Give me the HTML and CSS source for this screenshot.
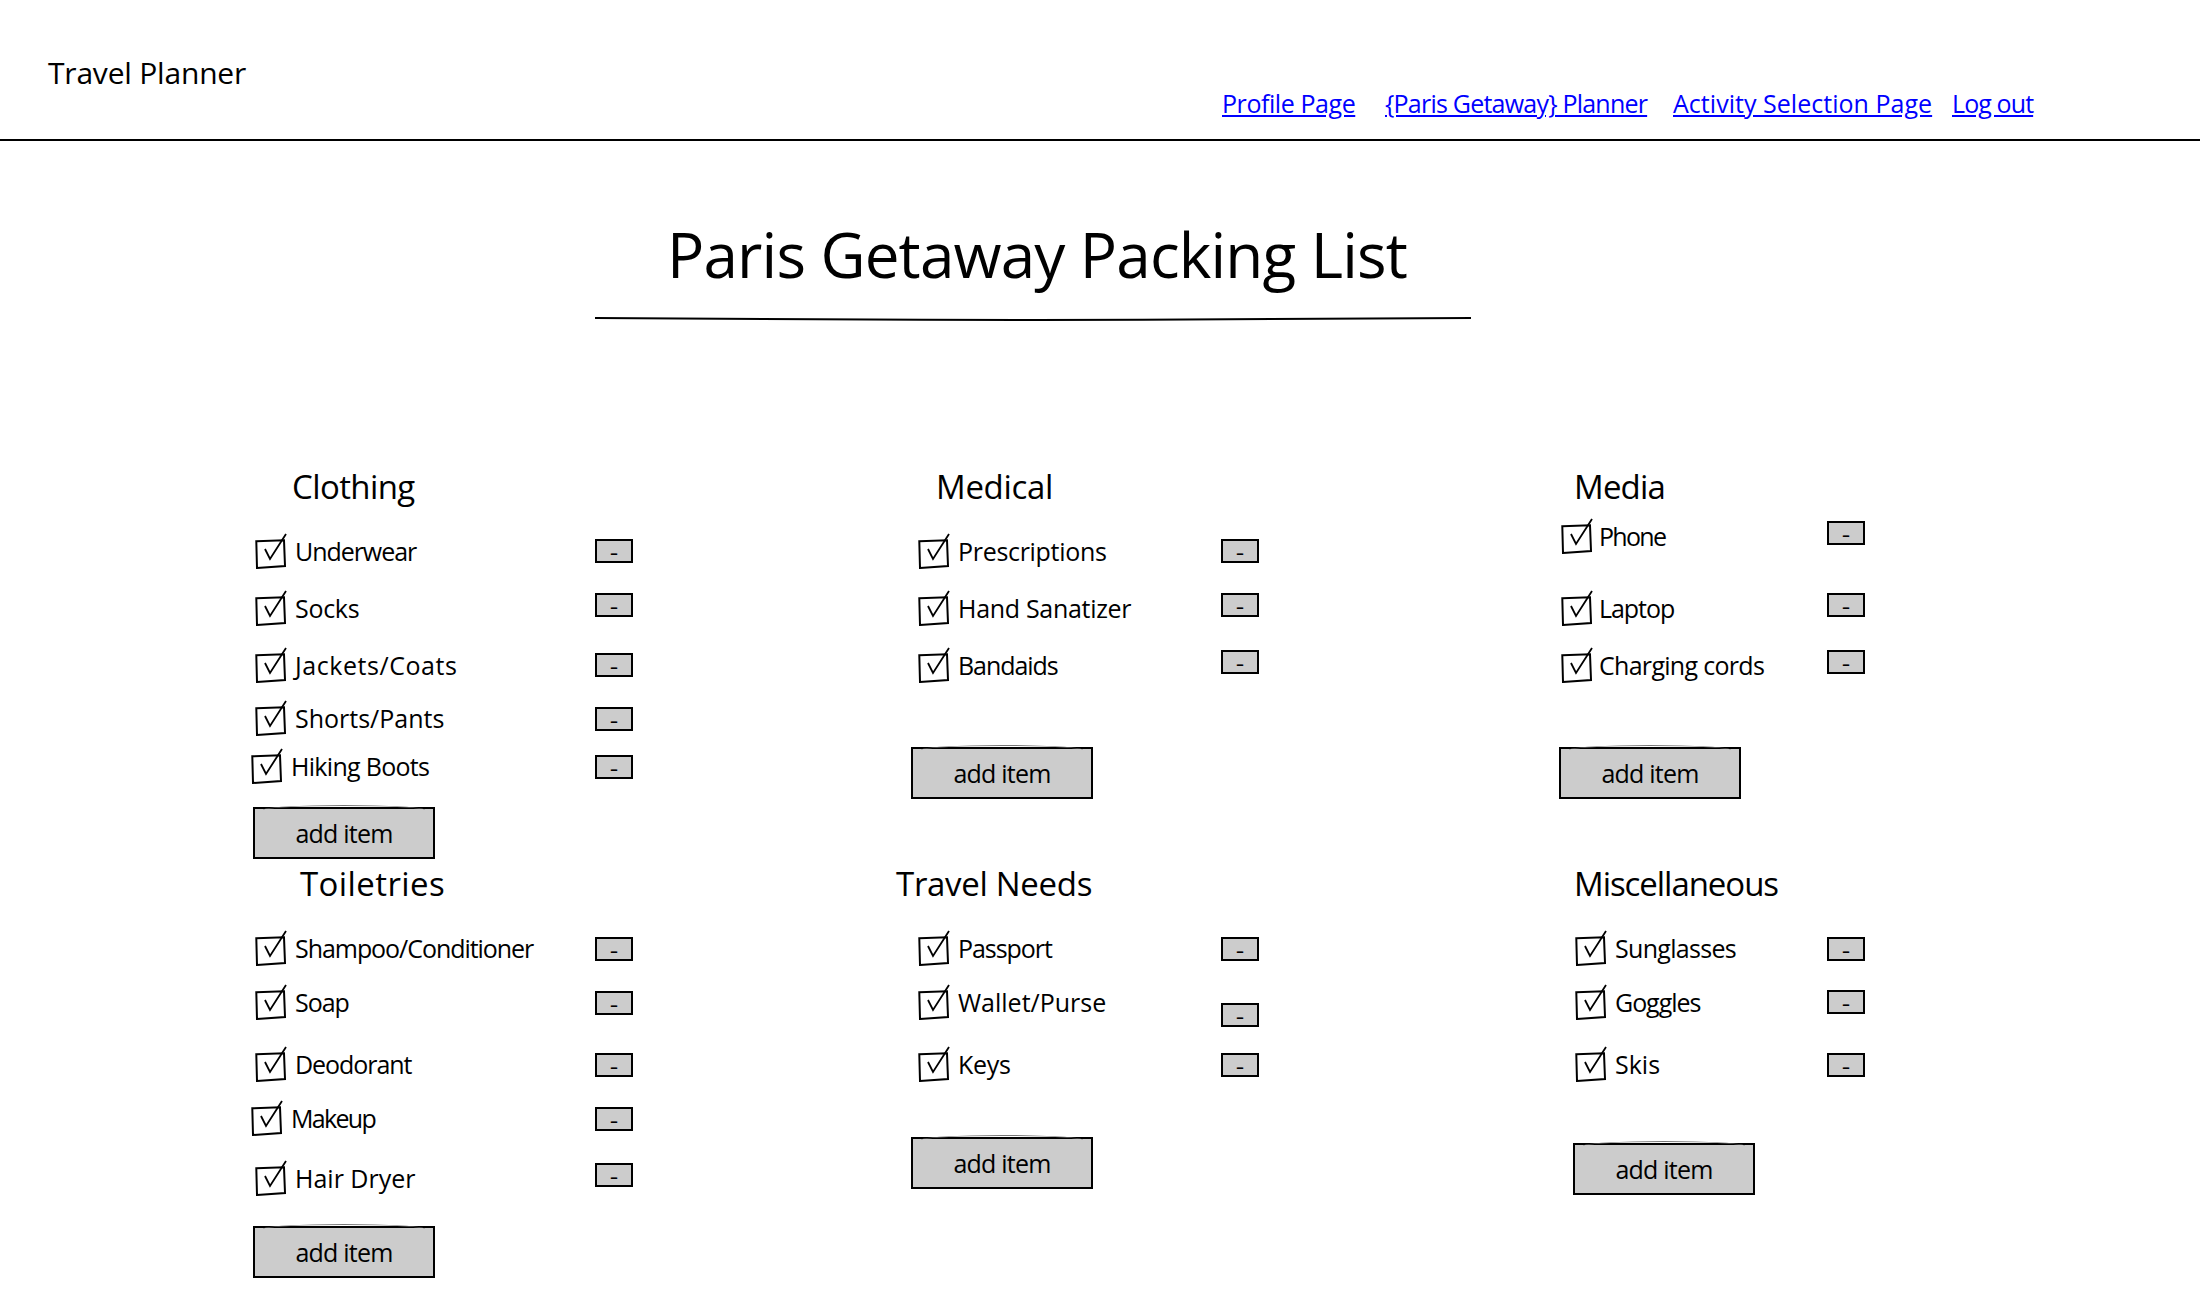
FILE: index.html
```html
<!DOCTYPE html>
<html lang="en">
<head>
<meta charset="utf-8">
<title>Paris Getaway Packing List</title>
<link rel="stylesheet" href="styles.css">
</head>
<body>
<svg class="defs" width="0" height="0" aria-hidden="true"><defs>
<g id="chk"><path d="M1.3 8.3 29 7.3 30 33 2 35Z" fill="none" stroke="#000" stroke-width="2"/><path d="M10 16 15 26 31 1" fill="none" stroke="#000" stroke-width="1.8"/></g>
</defs></svg>
<header class="topbar">
  <div class="brand">Travel Planner</div>
  <nav class="nav">
    <a class="nav-profile" href="#">Profile Page</a>
    <a class="nav-planner" href="#">{Paris Getaway} Planner</a>
    <a class="nav-activity" href="#">Activity Selection Page</a>
    <a class="nav-logout" href="#">Log out</a>
  </nav>
</header>
<div class="title-wrap">
  <h1 class="title">Paris Getaway Packing List</h1>
  <svg class="title-rule" width="876" height="4" viewBox="0 0 876 4"><path d="M0 1C200 2 300 3 440 3S700 2 876 1" fill="none" stroke="#000" stroke-width="2"/></svg>
</div>
<main class="board">
  <section class="group c1">
    <h2 class="head i-cloth sp-tight">Clothing</h2>
    <div class="row h56"><svg class="chk" viewBox="0 0 32 36"><use href="#chk"/></svg><span class="label ls-b">Underwear</span><button class="minus up1">–</button></div>
    <div class="row h58"><svg class="chk" viewBox="0 0 32 36"><use href="#chk"/></svg><span class="label">Socks</span><button class="minus up4">–</button></div>
    <div class="row h56"><svg class="chk" viewBox="0 0 32 36"><use href="#chk"/></svg><span class="label ls-d">Jackets/Coats</span><button class="minus up1">–</button></div>
    <div class="row h50"><svg class="chk" viewBox="0 0 32 36"><use href="#chk"/></svg><span class="label ls-e">Shorts/Pants</span><button class="minus">–</button></div>
    <div class="row h46 out"><svg class="chk" viewBox="0 0 32 36"><use href="#chk"/></svg><span class="label ls-c">Hiking Boots</span><button class="minus">–</button></div>
    <button class="add mt17">add item</button>
  </section>
  <section class="group c2">
    <h2 class="head i-med">Medical</h2>
    <div class="row h56"><svg class="chk" viewBox="0 0 32 36"><use href="#chk"/></svg><span class="label">Prescriptions</span><button class="minus up1">–</button></div>
    <div class="row h58"><svg class="chk" viewBox="0 0 32 36"><use href="#chk"/></svg><span class="label">Hand Sanatizer</span><button class="minus up4">–</button></div>
    <div class="row h56"><svg class="chk" viewBox="0 0 32 36"><use href="#chk"/></svg><span class="label ls-b">Bandaids</span><button class="minus up4">–</button></div>
    <button class="add mt53">add item</button>
  </section>
  <section class="group c3">
    <h2 class="head i-media sp-mid">Media</h2>
    <div class="row h50 first"><svg class="chk" viewBox="0 0 32 36"><use href="#chk"/></svg><span class="label ls-a">Phone</span><button class="minus up4">–</button></div>
    <div class="row h58 mt18"><svg class="chk" viewBox="0 0 32 36"><use href="#chk"/></svg><span class="label ls-b">Laptop</span><button class="minus up4">–</button></div>
    <div class="row h56"><svg class="chk" viewBox="0 0 32 36"><use href="#chk"/></svg><span class="label ls-c">Charging cords</span><button class="minus up4">–</button></div>
    <button class="add mt53">add item</button>
  </section>
  <section class="group c1">
    <h2 class="head i-toil sp-wide">Toiletries</h2>
    <div class="row h56"><svg class="chk" viewBox="0 0 32 36"><use href="#chk"/></svg><span class="label ls-b">Shampoo/Conditioner</span><button class="minus">–</button></div>
    <div class="row h52"><svg class="chk" viewBox="0 0 32 36"><use href="#chk"/></svg><span class="label ls-b">Soap</span><button class="minus">–</button></div>
    <div class="row h72"><svg class="chk" viewBox="0 0 32 36"><use href="#chk"/></svg><span class="label ls-b">Deodorant</span><button class="minus">–</button></div>
    <div class="row h36 out"><svg class="chk" viewBox="0 0 32 36"><use href="#chk"/></svg><span class="label ls-a">Makeup</span><button class="minus">–</button></div>
    <div class="row h84"><svg class="chk" viewBox="0 0 32 36"><use href="#chk"/></svg><span class="label ls-e">Hair Dryer</span><button class="minus up4">–</button></div>
    <button class="add mt5">add item</button>
  </section>
  <section class="group c2">
    <h2 class="head i-travel">Travel Needs</h2>
    <div class="row h56"><svg class="chk" viewBox="0 0 32 36"><use href="#chk"/></svg><span class="label ls-b">Passport</span><button class="minus">–</button></div>
    <div class="row h52"><svg class="chk" viewBox="0 0 32 36"><use href="#chk"/></svg><span class="label ls-e">Wallet/Purse</span><button class="minus down11">–</button></div>
    <div class="row h72"><svg class="chk" viewBox="0 0 32 36"><use href="#chk"/></svg><span class="label">Keys</span><button class="minus">–</button></div>
    <button class="add mt36">add item</button>
  </section>
  <section class="group c3 misc">
    <h2 class="head i-media sp-tighter">Miscellaneous</h2>
    <div class="row h56"><svg class="chk" viewBox="0 0 32 36"><use href="#chk"/></svg><span class="label ls-c">Sunglasses</span><button class="minus">–</button></div>
    <div class="row h52"><svg class="chk" viewBox="0 0 32 36"><use href="#chk"/></svg><span class="label ls-b">Goggles</span><button class="minus up1">–</button></div>
    <div class="row h72"><svg class="chk" viewBox="0 0 32 36"><use href="#chk"/></svg><span class="label ls-e">Skis</span><button class="minus">–</button></div>
    <button class="add mt42">add item</button>
  </section>
</main>
</body>
</html>
```
FILE: styles.css
```css
* { box-sizing: border-box; }
html, body { margin: 0; padding: 0; background: #fff; color: #000; }
body { width: 2212px; height: 1304px; overflow: hidden; font-family: "Open Sans", "Noto Sans", sans-serif; }
.defs { position: absolute; }

.topbar { width: 2200px; height: 141px; border-bottom: 2px solid #000; display: flex; align-items: flex-start; }
.brand { margin: 51px 0 0 48px; font-size: 30px; line-height: 44px; letter-spacing: -.2px; width: 1174px; }
.nav { display: flex; margin-top: 89px; font-size: 25px; line-height: 28px; }
.nav a { color: #00f; text-decoration: underline; white-space: nowrap; }
.nav-profile { width: 134px; margin-right: 29px; letter-spacing: -.43px; }
.nav-planner { width: 263px; margin-right: 25px; letter-spacing: -.78px; }
.nav-activity { width: 260px; margin-right: 19px; letter-spacing: .03px; }
.nav-logout { width: 82px; letter-spacing: -.9px; }

.title-wrap { width: 876px; margin: 0 0 0 595px; display: flex; flex-direction: column; align-items: center; }
.title { margin: 71px 0 0 8px; font-size: 62px; line-height: 84px; font-weight: 400; letter-spacing: -.83px; white-space: nowrap; }
.title-rule { display: block; margin-top: 21px; }

.board { margin: 141px 0 0 240px; display: grid; grid-template-columns: 650px 660px 400px; grid-template-rows: 397px 400px; }
.group { --check-x: 15px; --add-x: 13px; width: 393px; }
.c2 { --check-x: 28px; --add-x: 21px; width: 369px; }
.c3 { --check-x: 11px; --add-x: 9px; width: 315px; }
.misc { --check-x: 25px; --add-x: 23px; }

.head { margin: 0 0 12px; font-size: 33px; line-height: 50px; font-weight: 400; letter-spacing: -.3px; white-space: nowrap; }
.i-cloth { padding-left: 52px; }
.i-toil { padding-left: 60px; }
.i-med { padding-left: 46px; }
.i-travel { padding-left: 6px; }
.i-media { padding-left: 24px; }
.sp-tight { letter-spacing: -.6px; }
.sp-mid { letter-spacing: -.8px; }
.sp-tighter { letter-spacing: -1.05px; }
.sp-wide { letter-spacing: .4px; }

.row { display: flex; align-items: center; padding-left: var(--check-x); font-size: 25px; letter-spacing: -.3px; white-space: nowrap; }
.row.out { padding-left: calc(var(--check-x) - 4px); }
.row.first { margin-top: -12px; }
.chk { width: 32px; height: 36px; flex: none; margin: 0 8px 2px 0; }
.c3 .chk { margin-right: 6px; }
.misc .chk { margin-right: 8px; }
.label { flex: 1; min-width: 0; margin-top: -2px; }
.ls-a { letter-spacing: -1.7px; }
.ls-b { letter-spacing: -1.05px; }
.ls-c { letter-spacing: -.7px; }
.ls-d { letter-spacing: .55px; }
.ls-e { letter-spacing: 0; }

.minus { flex: none; width: 38px; height: 24px; padding: 2px 0 0; border: 2px solid #000; border-radius: 0; background: #ccc; color: #000; font: 700 15px/16px "Open Sans", sans-serif; }
.up1 { margin-bottom: 2px; }
.up4 { margin-bottom: 8px; }
.down11 { margin-top: 24px; }

.h36 { height: 36px; } .h46 { height: 46px; } .h50 { height: 50px; } .h52 { height: 52px; }
.h56 { height: 56px; } .h58 { height: 58px; } .h72 { height: 72px; } .h84 { height: 84px; }
.mt5 { margin-top: 5px; } .mt17 { margin-top: 17px; } .mt18 { margin-top: 18px; }
.mt36 { margin-top: 36px; } .mt42 { margin-top: 42px; } .mt53 { margin-top: 53px; }

.add { position: relative; display: block; width: 182px; height: 52px; margin-left: var(--add-x); padding: 0; border: 2px solid #000; border-radius: 0; background: #ccc; color: #000; font: 400 25px/46px "Open Sans", sans-serif; letter-spacing: -.8px; }
.add::before { content: ""; position: absolute; left: 8px; right: 8px; top: -4px; height: 4px; border-top: 1px solid #777; border-radius: 50% / 100% 100% 0 0; }
```
